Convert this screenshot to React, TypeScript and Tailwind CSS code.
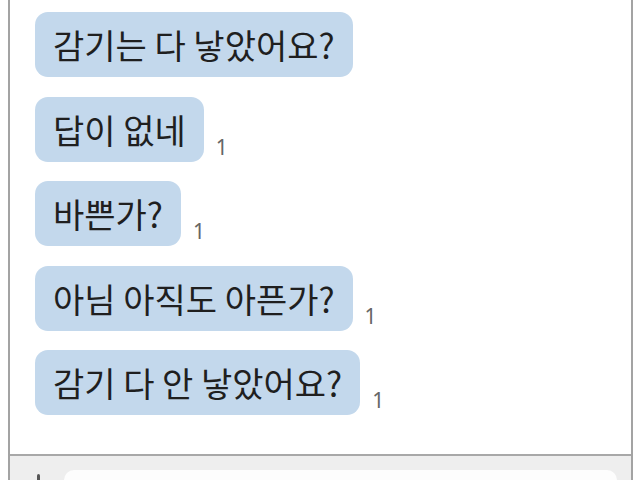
const messages = [
  { text: "감기는 다 낳았어요?", read: false },
  { text: "답이 없네", read: true },
  { text: "바쁜가?", read: true },
  { text: "아님 아직도 아픈가?", read: true },
  { text: "감기 다 안 낳았어요?", read: true },
];

export default function App() {
  return (
    <div className="h-[480px] w-[640px] overflow-hidden bg-white">
      <div className="ml-2 flex h-full w-[625px] flex-col border-x-2 border-[#a3a3a3]">
        {/* message list */}
        <div className="flex flex-1 flex-col gap-[19.5px] pl-[25px] pt-[12px]">
          {messages.map((m, i) => (
            <div key={i} className="flex items-end">
              <div
                className="flex h-[65px] items-center rounded-[13px] bg-[#c3d8ec] px-[18px] text-[34px] text-[#1f1f1f]"
                style={{ fontFamily: '"Noto Sans CJK KR", "Noto Sans", sans-serif' }}
              >
                {m.text}
              </div>
              {m.read && (
                <span
                  className="mb-[4px] ml-[12px] text-[21px] leading-none text-[#666666]"
                  style={{ fontFamily: '"Noto Sans", sans-serif' }}
                >
                  1
                </span>
              )}
            </div>
          ))}
        </div>

        {/* input bar */}
        <div className="flex h-[26px] items-end gap-[24px] border-t-2 border-[#a8a8a8] bg-[#eeeeee] pl-[27px] pr-[14px]">
          <div className="h-[6px] w-[3px] rounded-t-sm bg-[#555555]" />
          <div className="h-[10px] flex-1 rounded-t-[10px] bg-[#fdfdfd]" />
        </div>
      </div>
    </div>
  );
}
